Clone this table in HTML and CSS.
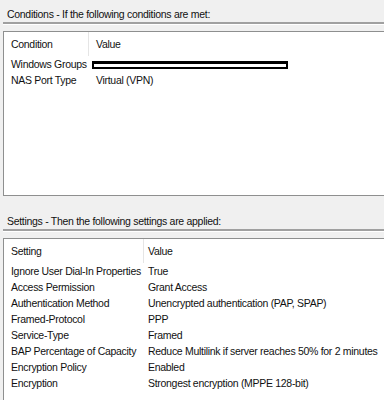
FILE: index.html
```html
<!DOCTYPE html>
<html lang="en">
<head>
    <meta charset="UTF-8">
    <title>Policy Overview</title>
    <link rel="stylesheet" href="styles.css">
</head>
<body>
    <div class="section-title">Conditions - If the following conditions are met:</div>
    <div class="rule"></div>
    <div class="list-box conditions">
        <div class="list-row list-head">
            <div class="col-name">Condition</div>
            <div class="col-value">Value</div>
        </div>
        <div class="list-row">
            <div class="col-name">Windows Groups</div>
            <div class="col-value"><span class="redacted"></span></div>
        </div>
        <div class="list-row">
            <div class="col-name">NAS Port Type</div>
            <div class="col-value">Virtual (VPN)</div>
        </div>
    </div>

    <div class="section-title second">Settings - Then the following settings are applied:</div>
    <div class="rule"></div>
    <div class="list-box settings">
        <div class="list-row list-head">
            <div class="col-name">Setting</div>
            <div class="col-value">Value</div>
        </div>
        <div class="list-row">
            <div class="col-name">Ignore User Dial-In Properties</div>
            <div class="col-value">True</div>
        </div>
        <div class="list-row">
            <div class="col-name">Access Permission</div>
            <div class="col-value">Grant Access</div>
        </div>
        <div class="list-row">
            <div class="col-name">Authentication Method</div>
            <div class="col-value">Unencrypted authentication (PAP, SPAP)</div>
        </div>
        <div class="list-row">
            <div class="col-name">Framed-Protocol</div>
            <div class="col-value">PPP</div>
        </div>
        <div class="list-row">
            <div class="col-name">Service-Type</div>
            <div class="col-value">Framed</div>
        </div>
        <div class="list-row">
            <div class="col-name">BAP Percentage of Capacity</div>
            <div class="col-value">Reduce Multilink if server reaches 50% for 2 minutes</div>
        </div>
        <div class="list-row">
            <div class="col-name">Encryption Policy</div>
            <div class="col-value">Enabled</div>
        </div>
        <div class="list-row">
            <div class="col-name">Encryption</div>
            <div class="col-value">Strongest encryption (MPPE 128-bit)</div>
        </div>
    </div>
</body>
</html>
```

FILE: styles.css
```css
:root {
    --window-bg: #f0f0f0;
    --text: #111111;
    --rule: #a0a0a0;
    --box-border: #8e8f8f;
    --divider: #e5e5e5;
}

* {
    margin: 0;
    padding: 0;
    box-sizing: border-box;
}

html,
body {
    overflow: hidden;
}

body {
    background-color: var(--window-bg);
    color: var(--text);
    font-family: "Liberation Sans", Arial, sans-serif;
    font-size: 10.5px;
    letter-spacing: -0.3px;
    padding-left: 3px;
    width: 384px;
    height: 400px;
}

.section-title {
    padding-top: 6px;
    padding-left: 4px;
    height: 22px;
    line-height: 16px;
    white-space: nowrap;
}

.section-title.second {
    margin-top: 17px;
    height: 16px;
    padding-top: 0;
}

.rule {
    border-top: 2px solid var(--rule);
    border-bottom: 1px solid #ffffff;
    margin-bottom: 6px;
    width: 390px;
}

.list-box {
    background-color: #ffffff;
    border: 1px solid var(--box-border);
    border-right: none;
    width: 381px;
    overflow: hidden;
}

.list-box.conditions {
    height: 165px;
}

.list-box.settings {
    height: 162px;
    border-bottom: none;
}

.list-row {
    display: flex;
    height: 16px;
    line-height: 16px;
    white-space: nowrap;
}

.list-row.list-head {
    height: 24px;
    line-height: 24px;
}

.col-name {
    flex-shrink: 0;
    padding-left: 7px;
}

.conditions .col-name {
    width: 85px;
}

.settings .col-name {
    width: 140px;
}

.list-head .col-name {
    border-right: 1px solid var(--divider);
}

.conditions .col-value {
    padding-left: 7px;
}

.settings .col-value {
    padding-left: 4px;
}

.redacted {
    display: inline-block;
    width: 196px;
    height: 8px;
    margin-left: -4px;
    vertical-align: -1px;
    border: 2px solid #000000;
    border-top-width: 3px;
    background-color: #ffffff;
}
```
